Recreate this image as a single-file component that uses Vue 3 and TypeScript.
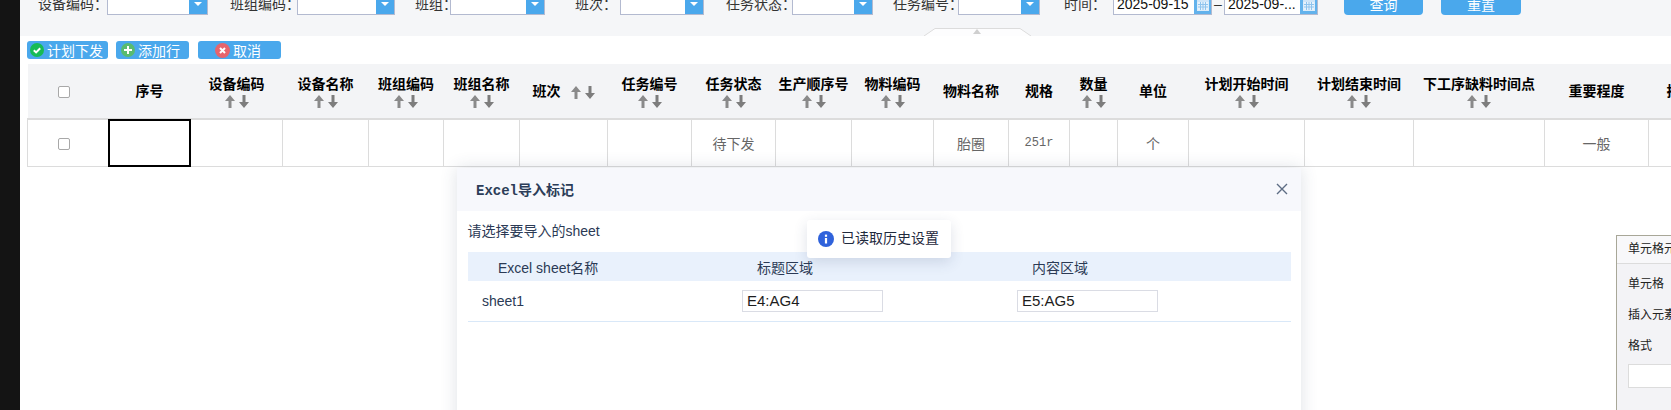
<script setup lang="ts">
import { computed } from 'vue'

interface Field { label: string; gap: number; labelW: number; inputW: number }
interface Col { title: string; w: number; sort?: 'below' | 'inline'; value?: string; mono?: boolean }

const fields: Field[] = [
  { label: '设备编码：', gap: 18, labelW: 69, inputW: 101 },
  { label: '班组编码：', gap: 22, labelW: 67, inputW: 98 },
  { label: '班组：', gap: 20, labelW: 35, inputW: 95 },
  { label: '班次：', gap: 30, labelW: 45, inputW: 84 },
  { label: '任务状态：', gap: 22, labelW: 66, inputW: 81 },
  { label: '任务编号：', gap: 20, labelW: 65, inputW: 82 }
]

const cols: Col[] = [
  { title: '序号', w: 82 },
  { title: '设备编码', w: 92, sort: 'below' },
  { title: '设备名称', w: 86, sort: 'below' },
  { title: '班组编码', w: 75, sort: 'below' },
  { title: '班组名称', w: 76, sort: 'below' },
  { title: '班次', w: 88, sort: 'inline' },
  { title: '任务编号', w: 84, sort: 'below' },
  { title: '任务状态', w: 84, sort: 'below', value: '待下发' },
  { title: '生产顺序号', w: 76, sort: 'below' },
  { title: '物料编码', w: 82, sort: 'below' },
  { title: '物料名称', w: 75, value: '胎圈' },
  { title: '规格', w: 61, value: '251r', mono: true },
  { title: '数量', w: 48, sort: 'below' },
  { title: '单位', w: 71, value: '个' },
  { title: '计划开始时间', w: 116, sort: 'below' },
  { title: '计划结束时间', w: 109, sort: 'below' },
  { title: '下工序缺料时间点', w: 131, sort: 'below' },
  { title: '重要程度', w: 104, value: '一般' },
  { title: '排序', w: 64 }
]

const tableWidth = computed(() => 81 + cols.reduce((s, c) => s + c.w, 0))
</script>

<template>
  <div class="screen">
    <div class="strip"></div>
    <main class="page">
      <section class="filter">
        <div class="filter-row">
          <div
            v-for="f in fields"
            :key="f.label"
            class="field"
            :style="{ marginLeft: f.gap + 'px' }"
          >
            <span class="field-label" :style="{ width: f.labelW + 'px' }">{{ f.label }}</span>
            <div class="combo" :style="{ width: f.inputW + 'px' }">
              <span class="combo-btn"><i class="caret"></i></span>
            </div>
          </div>
          <span class="field-label time-label">时间：</span>
          <div class="date date-a">
            <span class="date-text">2025-09-15</span>
            <span class="cal">
              <svg width="12" height="13" viewBox="0 0 12 13">
                <rect x="0.5" y="1.5" width="11" height="11" fill="#e6f2fc" stroke="#dcecf9" />
                <rect x="0" y="1" width="12" height="3" fill="#cfe5f8" />
                <path d="M3.5 4v8M6 4v8M8.5 4v8M1 6.5h10M1 9h10" stroke="#8fc4ee" fill="none" />
              </svg>
            </span>
          </div>
          <span class="dash">–</span>
          <div class="date date-b">
            <span class="date-text">2025-09-...</span>
            <span class="cal">
              <svg width="12" height="13" viewBox="0 0 12 13">
                <rect x="0.5" y="1.5" width="11" height="11" fill="#e6f2fc" stroke="#dcecf9" />
                <rect x="0" y="1" width="12" height="3" fill="#cfe5f8" />
                <path d="M3.5 4v8M6 4v8M8.5 4v8M1 6.5h10M1 9h10" stroke="#8fc4ee" fill="none" />
              </svg>
            </span>
          </div>
          <button class="act act-query">查询</button>
          <button class="act act-reset">重置</button>
        </div>
        <svg class="collapse" width="107" height="8" viewBox="0 0 107 8">
          <path d="M0 8L11 .5H96L107 8" fill="#fdfdfe" stroke="#dcdcdc" />
          <path d="M49 6L53 1L57 6Z" fill="#cfcfcf" />
        </svg>
      </section>

      <div class="toolbar">
        <button class="tool tool-plan">
          <svg width="14" height="14" viewBox="0 0 14 14">
            <circle cx="7" cy="7" r="7" fill="#17bb55" />
            <path d="M3.8 7.2L6.1 9.4L10.2 5.2" stroke="#fff" stroke-width="2" fill="none" />
          </svg>
          计划下发
        </button>
        <button class="tool tool-add">
          <svg width="14" height="14" viewBox="0 0 14 14">
            <circle cx="7" cy="7" r="7" fill="#58bb70" />
            <path d="M7 3V11M3 7H11" stroke="#fff" stroke-width="2" fill="none" />
          </svg>
          添加行
        </button>
        <button class="tool tool-cancel">
          <svg width="15" height="15" viewBox="0 0 15 15">
            <circle cx="7.5" cy="7.5" r="7.5" fill="#e7646c" />
            <path d="M5 5L10 10M10 5L5 10" stroke="#fff" stroke-width="2" fill="none" />
          </svg>
          取消
        </button>
      </div>

      <table class="grid" :style="{ width: tableWidth + 'px' }">
        <colgroup>
          <col class="col-check" />
          <col v-for="c in cols" :key="c.title" :style="{ width: c.w + 'px' }" />
        </colgroup>
        <thead>
          <tr>
            <th class="cell-check"><span class="check"></span></th>
            <th v-for="c in cols" :key="c.title">
              <span class="th-title">{{ c.title }}</span>
              <span v-if="c.sort" class="sort" :class="{ 'sort-inline': c.sort === 'inline' }">
                <svg width="10" height="13" viewBox="0 0 10 13">
                  <path d="M5 0L10 6H6.5V13H3.5V6H0Z" fill="#8a8a8a" />
                </svg>
                <svg width="10" height="13" viewBox="0 0 10 13">
                  <path d="M5 13L10 7H6.5V0H3.5V7H0Z" fill="#7d7d7d" />
                </svg>
              </span>
            </th>
          </tr>
        </thead>
        <tbody>
          <tr>
            <td class="cell-check"><span class="check"></span></td>
            <td
              v-for="(c, i) in cols"
              :key="c.title"
              :class="{ selected: i === 0, mono: c.mono }"
            >{{ c.value }}</td>
          </tr>
        </tbody>
      </table>
    </main>

    <section class="modal">
      <header class="modal-head">
        <h2 class="modal-title"><span class="modal-latin">Excel</span>导入标记</h2>
        <svg class="modal-close" width="12" height="12" viewBox="0 0 12 12">
          <path d="M1 1L11 11M11 1L1 11" stroke="#5d6d84" stroke-width="1.4" fill="none" />
        </svg>
      </header>
      <div class="modal-body">
        <p class="modal-hint">请选择要导入的sheet</p>
        <div class="sheet-head">
          <span class="sh-name">Excel sheet名称</span>
          <span class="sh-col">标题区域</span>
          <span class="sh-col">内容区域</span>
        </div>
        <div class="sheet-row">
          <span class="sr-name">sheet1</span>
          <div class="range">E4:AG4</div>
          <div class="range">E5:AG5</div>
        </div>
      </div>
    </section>

    <div class="toast">
      <svg width="16" height="16" viewBox="0 0 16 16">
        <circle cx="8" cy="8" r="8" fill="#2f62db" />
        <rect x="6.9" y="7" width="2.2" height="5.5" fill="#fff" />
        <rect x="6.9" y="3.6" width="2.2" height="2.2" fill="#fff" />
      </svg>
      <span class="toast-text">已读取历史设置</span>
    </div>

    <aside class="panel">
      <div class="panel-head">单元格元素</div>
      <div class="panel-body">
        <div class="panel-line">单元格</div>
        <div class="panel-line">插入元素</div>
        <div class="panel-line">格式</div>
        <div class="panel-input"></div>
      </div>
    </aside>
  </div>
</template>

<style scoped>
.screen {
  position: relative;
  display: flex;
  width: 1671px;
  height: 410px;
  overflow: hidden;
  background: #fff;
  font-family: "Liberation Sans", "Noto Sans CJK SC", sans-serif;
  font-size: 14px;
  color: #222;
}
.strip {
  flex: 0 0 20px;
  background: #141414;
}
.page {
  flex: 1;
  min-width: 0;
}
.filter {
  position: relative;
  display: flow-root;
  height: 36px;
  background: #f5f6f8;
}
.filter-row {
  display: flex;
  align-items: center;
  height: 22px;
  margin-top: -7px;
}
.field {
  display: flex;
  align-items: center;
}
.field-label {
  flex: none;
  white-space: nowrap;
  color: #333;
  line-height: 22px;
}
.combo {
  position: relative;
  display: flex;
  justify-content: flex-end;
  height: 22px;
  box-sizing: border-box;
  background: #fff;
  border: 1px solid #b3bad0;
}
.combo-btn {
  display: flex;
  align-items: center;
  justify-content: center;
  width: 18px;
  background: #4aa8ec;
}
.caret {
  width: 0;
  height: 0;
  border-left: 4px solid transparent;
  border-right: 4px solid transparent;
  border-top: 4px solid #fff;
}
.time-label {
  width: 49px;
  margin-left: 24px;
}
.date {
  display: flex;
  height: 22px;
  box-sizing: border-box;
  background: #fff;
  border: 1px solid #b3bad0;
}
.date-a {
  width: 99px;
}
.date-b {
  width: 94px;
}
.date-text {
  flex: 1;
  padding-left: 3px;
  line-height: 20px;
  color: #111;
  white-space: nowrap;
}
.cal {
  display: flex;
  align-items: center;
  justify-content: center;
  width: 17px;
  background: #62b2ec;
}
.dash {
  width: 12px;
  text-align: center;
  color: #333;
}
.act {
  height: 22px;
  padding: 0;
  border: 0;
  border-radius: 4px;
  background: #4aa8ec;
  color: #fff;
  font: inherit;
}
.act-query {
  width: 79px;
  margin-left: 26px;
}
.act-reset {
  width: 80px;
  margin-left: 18px;
}
.collapse {
  position: absolute;
  left: 904px;
  bottom: 0;
}
.toolbar {
  display: flex;
  gap: 8px;
  margin: 5px 0 5px 7px;
}
.tool {
  display: flex;
  align-items: center;
  justify-content: flex-start;
  gap: 3px;
  height: 18px;
  padding: 0 0 0 3px;
  border: 0;
  border-radius: 3px;
  background: #4aa8ec;
  color: #fff;
  font: inherit;
  white-space: nowrap;
}
.tool-plan {
  width: 81px;
}
.tool-add {
  width: 73px;
  padding-left: 5px;
}
.tool-cancel {
  width: 83px;
  margin-left: 1px;
  padding-left: 17px;
}
.grid {
  table-layout: fixed;
  margin-left: 7px;
  border-collapse: collapse;
}
.col-check {
  width: 81px;
}
th {
  height: 54px;
  padding: 0;
  background: #f3f4f6;
  border-bottom: 2px solid #dcdcdc;
  font-weight: 700;
  color: #000;
  line-height: 18px;
  white-space: nowrap;
}
.th-title {
  display: inline-block;
}
.sort {
  display: flex;
  justify-content: center;
  gap: 4px;
  margin-top: 2px;
}
.sort-inline {
  display: inline-flex;
  margin: 0 0 0 10px;
  vertical-align: middle;
}
td {
  position: relative;
  height: 46px;
  padding: 0;
  border: 1px solid #dcdcdc;
  border-top: 0;
  text-align: center;
  color: #666;
}
th.cell-check,
td.cell-check {
  padding-right: 8px;
}
.mono {
  font-family: "Liberation Mono", monospace;
  font-size: 12px;
}
.selected::after {
  content: "";
  position: absolute;
  inset: -1px;
  border: 2px solid #000;
}
.check {
  display: inline-block;
  width: 12px;
  height: 12px;
  box-sizing: border-box;
  background: #fff;
  border: 1px solid #a8a8a8;
  border-radius: 2px;
  vertical-align: middle;
}
.modal {
  position: absolute;
  left: 457px;
  top: 168px;
  width: 844px;
  height: 270px;
  background: #fff;
  box-shadow: 0 0 16px rgba(50, 70, 100, 0.16);
}
.modal-head {
  display: flex;
  align-items: center;
  justify-content: space-between;
  height: 43px;
  padding: 0 13px 2px 19px;
  box-sizing: border-box;
  background: #f7f8fc;
}
.modal-title {
  margin: 0;
  font-size: 14px;
  font-weight: 700;
  color: #2c3d58;
}
.modal-latin {
  font-family: "Liberation Mono", monospace;
}
.modal-body {
  padding: 0 10px 0 10.5px;
  color: #2b3a55;
}
.modal-hint {
  margin: 10px 0 0;
  height: 22px;
  line-height: 20px;
}
.sheet-head,
.sheet-row {
  display: grid;
  grid-template-columns: 274.5px 275px 1fr;
}
.sheet-head {
  align-items: center;
  height: 29px;
  margin-top: 9px;
  background: #e9f1fc;
}
.sh-name {
  padding-left: 30.5px;
}
.sh-col {
  padding-left: 15px;
}
.sheet-row {
  height: 41px;
  box-sizing: border-box;
  padding-top: 9px;
  border-bottom: 1px solid #d9e8f8;
}
.sr-name {
  padding-left: 14.5px;
  line-height: 22px;
}
.range {
  width: 141px;
  height: 22px;
  box-sizing: border-box;
  padding-left: 4px;
  border: 1px solid #dadce4;
  background: #fff;
  font-size: 15px;
  line-height: 20px;
  color: #1d1d1d;
}
.toast {
  position: absolute;
  left: 807px;
  top: 220px;
  display: flex;
  align-items: center;
  gap: 8px;
  width: 144px;
  height: 38px;
  box-sizing: border-box;
  padding-left: 11px;
  border-radius: 3px;
  background: #fff;
  box-shadow: 0 4px 14px rgba(50, 70, 110, 0.16);
  color: #1f2a3d;
  white-space: nowrap;
}
.toast-text {
  margin-left: -1px;
  line-height: 18px;
  padding-bottom: 2px;
}
.panel {
  position: absolute;
  left: 1616px;
  top: 235px;
  right: 0;
  bottom: 0;
  overflow: hidden;
  box-sizing: border-box;
  border-left: 1px solid #a8a798;
  border-top: 1px solid #a8a798;
  background: #f3f3f6;
  color: #222;
  font-size: 12px;
  white-space: nowrap;
}
.panel-head {
  height: 27px;
  padding-left: 11px;
  line-height: 26px;
  background: #f8f8fa;
  border-bottom: 1px solid #dcdcdc;
}
.panel-body {
  padding: 10px 0 0 11px;
}
.panel-line {
  height: 31px;
  line-height: 20px;
}
.panel-input {
  width: 100px;
  height: 24px;
  margin-top: -3px;
  box-sizing: border-box;
  background: #fff;
  border: 1px solid #dcdcdc;
}
</style>

<style>
html,
body {
  margin: 0;
  background: #fff;
}
</style>
